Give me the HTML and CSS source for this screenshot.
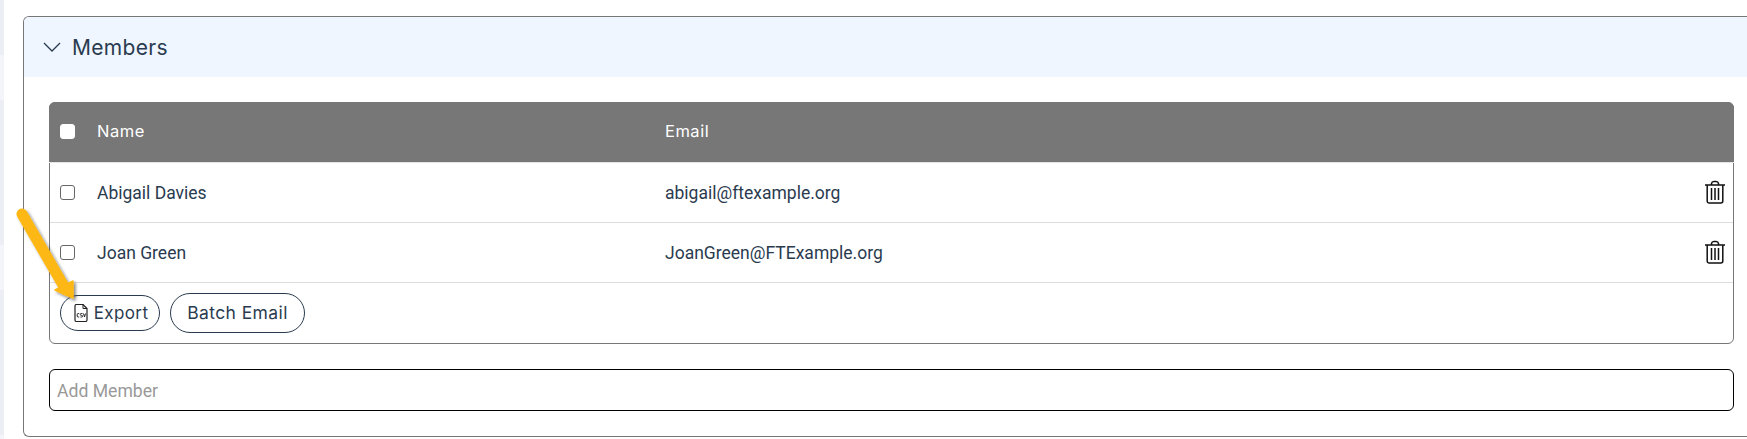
FILE: index.html
```html
<!DOCTYPE html>
<html lang="en">
<head>
<meta charset="utf-8">
<title>Members</title>
<link rel="stylesheet" href="styles.css">
</head>
<body>
<div class="strip"></div>
<main class="main">
  <section class="panel">
    <header class="panel-head">
      <svg class="chevron" viewBox="0 0 18 10" width="18" height="10"><path d="M1 1l8 8 8-8" fill="none" stroke="#2a3b4f" stroke-width="1.3"/></svg>
      <h2 class="panel-title">Members</h2>
    </header>
    <div class="panel-body">
      <div class="table">
        <div class="row row-head">
          <input class="check check-head" type="checkbox" aria-label="Select all">
          <span class="col-name">Name</span>
          <span class="col-email">Email</span>
        </div>
        <div class="row">
          <input class="check" type="checkbox" aria-label="Select">
          <span class="col-name">Abigail Davies</span>
          <span class="col-email">abigail@ftexample.org</span>
          <svg class="trash" viewBox="0 0 20 24" width="20" height="24"><use href="#trash-icon"/></svg>
        </div>
        <div class="row">
          <input class="check" type="checkbox" aria-label="Select">
          <span class="col-name">Joan Green</span>
          <span class="col-email">JoanGreen@FTExample.org</span>
          <svg class="trash" viewBox="0 0 20 24" width="20" height="24"><use href="#trash-icon"/></svg>
        </div>
        <div class="table-foot">
          <button class="pill pill-export" type="button">
            <svg viewBox="0 0 14 18" width="14" height="18"><path d="M1 2a1.500 1.500 0 0 1 1.500-1.500h6.500l4 4v11.500a1.500 1.500 0 0 1-1.500 1.500h-9a1.500 1.500 0 0 1-1.500-1.500z" fill="#fff" stroke="#222" stroke-width="1.200"/><path d="M9 .5v4h4" fill="none" stroke="#222" stroke-width="1"/><path d="M5.200 9.500h-1a1 1 0 0 0-1 1v1.500a1 1 0 0 0 1 1h1M8.500 9.500h-1.300a.8.8 0 0 0 0 1.900h.6a.8.8 0 0 1 0 1.600h-1.300M9.500 9.500l1 3.500 1-3.500" fill="none" stroke="#222" stroke-width="1"/></svg>
            Export
          </button>
          <button class="pill pill-batch" type="button">Batch Email</button>
        </div>
      </div>
      <input class="add-member" type="text" placeholder="Add Member">
    </div>
  </section>
</main>
<svg class="defs" width="0" height="0" aria-hidden="true">
  <symbol id="trash-icon" viewBox="0 0 20 24">
    <path d="M0 5h20M6.500 5V3.500a2.500 2.500 0 0 1 2.500-2h2a2.500 2.500 0 0 1 2.500 2V5" fill="none" stroke="#111" stroke-width="1.500"/>
    <path d="M2.200 5v16a2 2 0 0 0 2 2h11.600a2 2 0 0 0 2-2V5" fill="none" stroke="#111" stroke-width="1.500"/>
    <path d="M6.500 8v12M10 8v12M13.500 8v12" fill="none" stroke="#111" stroke-width="1.500"/>
  </symbol>
</svg>
<svg class="arrow" viewBox="0 0 70 100" width="70" height="100" aria-hidden="true">
  <defs><filter id="arrow-shadow" x="-30%" y="-30%" width="160%" height="160%"><feDropShadow dx="2" dy="2" stdDeviation="1.500" flood-color="#000" flood-opacity=".45"/></filter></defs>
  <g filter="url(#arrow-shadow)">
    <path d="M14 6 L58 82" stroke="#fdb813" stroke-width="11" stroke-linecap="round" fill="none"/>
    <path d="M65 90 L47 82 L65 73z" fill="#fdb813" stroke="#fdb813" stroke-width="1.500" stroke-linejoin="round"/>
  </g>
</svg>
</body>
</html>
```
FILE: styles.css
```css
* { box-sizing: border-box; }
html, body { margin: 0; height: 439px; overflow: hidden; background: #fff; }
body { display: flex; position: relative; font-family: Roboto, "Liberation Sans", sans-serif; color: #2a3b4f; }
.strip { width: 4px; flex: none; background: repeating-linear-gradient(180deg, #eceef6 0 55px, #f4f5fa 55px 100px, #eceef6 100px 190px); }
.main { flex: 1; min-width: 0; padding: 16px 0 0 19px; }
.panel { border: 1px solid #777; border-right: 0; border-radius: 6px 0 0 6px; height: 421px; }
.panel-head { height: 60px; background: #eff6ff; display: flex; align-items: center; padding-left: 19px; gap: 11px; border-top-left-radius: 5px; }
.chevron { flex: none; }
.panel-title { margin: 0; font: 400 21px Inter, "Open Sans", sans-serif; letter-spacing: .3px; color: #2a3b4f; }
.panel-body { padding: 25px 13px 0 25px; }
.table { border: 1px solid #777; border-radius: 6px; height: 242px; }
.row { height: 60px; display: flex; align-items: center; padding-left: 10px; border-bottom: 1px solid #ddd; font-size: 17.500px; }
.row-head { margin: -1px -1px 0; width: calc(100% + 2px); height: 61px; padding: 0 0 2px 11px; background: #777; color: #fff; border-bottom: 1px solid #e4e4e4; border-radius: 6px 6px 0 0; font: 400 16.500px Inter, "Open Sans", sans-serif; letter-spacing: .5px; }
.check { appearance: none; margin: 0; width: 15px; height: 15px; border: 1px solid #666; border-radius: 3px; background: #fff; flex: none; }
.check-head { border-color: #fff; }
.col-name { margin-left: 22px; width: 568px; }
.col-email { flex: 1; }
.trash { flex: none; margin: 0 8px 2px 0; }
.table-foot { display: flex; align-items: center; gap: 10px; height: 59px; padding-left: 10px; }
.pill { display: inline-flex; align-items: center; justify-content: center; border: 1px solid #2a3b4f; border-radius: 20px; background: #fff; color: #2a3b4f; font: 400 17.500px Inter, "Open Sans", sans-serif; letter-spacing: .4px; padding: 0; }
.pill-export { width: 100px; height: 36px; gap: 6px; font-size: 17px; padding-left: 2px; }
.pill-batch { width: 135px; height: 40px; }
.add-member { display: block; margin-top: 25px; width: 100%; height: 42px; border: 1px solid #000; border-radius: 6px; padding: 2px 7px 0; font: 400 17.600px Roboto, sans-serif; outline: 0; }
.add-member::placeholder { color: #999; opacity: 1; }
.defs { position: absolute; }
.arrow { position: absolute; left: 8px; top: 208px; pointer-events: none; }
```
